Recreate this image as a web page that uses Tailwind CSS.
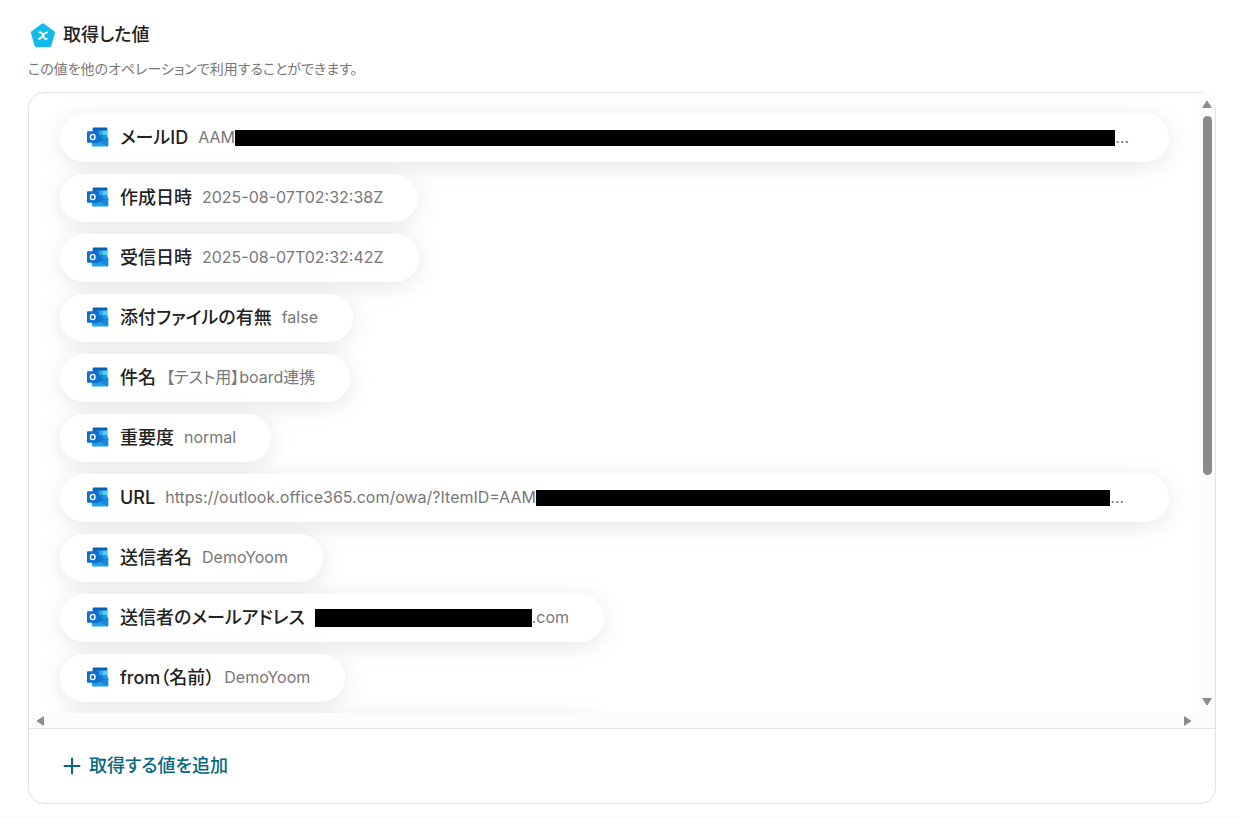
<!DOCTYPE html>
<html lang="ja">
<head>
    <meta charset="UTF-8">
    <meta name="viewport" content="width=device-width, initial-scale=1.0">
    <title>取得した値</title>
    <script src="https://cdn.jsdelivr.net/npm/@tailwindcss/browser@4"></script>
</head>
<body class="flex h-screen flex-col border-b border-[#f9f9f9] bg-white px-7 pt-[21px] pb-[13px] font-['Inter','Noto_Sans_CJK_JP',sans-serif] text-[#222] [font-feature-settings:'palt']">

    <!-- アイコン定義 -->
    <svg class="hidden">
        <symbol id="outlook" viewBox="0 0 24 24">
            <path d="M7.5 2.5h13a.8.8 0 0 1 .8.8V17H6.7V3.3a.8.8 0 0 1 .8-.8z" fill="#0a5fb4"/>
            <path d="M6.7 5.5h4.9v5H6.7z" fill="#0f78d4"/>
            <path d="M11.6 5.5h4.8v5h-4.8z" fill="#28a8ea"/>
            <path d="M16.4 5.5h4.9v5h-4.9z" fill="#50d0fa"/>
            <path d="M11.6 10.500h4.800v5h-4.800z" fill="#0f78d4"/>
            <path d="M16.400 10.500h4.900v4h-4.900z" fill="#1e96e4"/>
            <path d="M6 12.500l8.300 4.200 7.900-4.200v8.200a.8.8 0 0 1-.8.8H6.800a.8.8 0 0 1-.8-.8z" fill="#22a2ea"/>
            <path d="M22.200 12.500v8.200a.8.8 0 0 1-.2.500L13.500 16.900z" fill="#1787dc"/>
            <path d="M13.600 7v10.500a1 1 0 0 1-1 1H6V6h6.600a1 1 0 0 1 1 1z" fill="#064a8c" fill-opacity=".25"/>
            <rect x="1" y="6.300" width="11.400" height="11.400" rx=".9" fill="#0f6fd0"/>
            <ellipse cx="6.700" cy="12" rx="2.300" ry="2.600" fill="none" stroke="#fff" stroke-width="1.400"/>
        </symbol>
    </svg>

    <header>
        <div class="flex h-7 items-center gap-1.5">
            <svg class="ml-0.5 size-[27px] shrink-0" viewBox="0 0 27 27">
                <path d="M12.900 3.200L23.200 10.800l-3.600 12.500H6.300L2.700 10.800z" fill="#12bbea" stroke="#12bbea" stroke-width="3.600" stroke-linejoin="round"/>
                <path d="M9.300 10.300h1.400c.7 0 1 .4 1.300 1l2 4.400c.3.700.7 1.100 1.400 1.100h1.300M17.200 10.300c-1.500 0-2 .5-2.900 1.600l-2.900 3.500c-.8 1-1.300 1.400-2.500 1.400" fill="none" stroke="#fff" stroke-width="1.800" stroke-linecap="round"/>
            </svg>
            <h1 class="text-[18px] leading-6 font-medium">取得した値</h1>
        </div>
        <p class="mt-2.5 text-[14px] leading-5 text-[#777]">この値を他のオペレーションで利用することができます。</p>
    </header>

    <main class="mt-[13px] mr-[-2px] flex min-h-0 flex-1 flex-col rounded-2xl border border-[#e3e3e3]">
        <div class="flex min-h-0 flex-1 border-b border-[#e3e3e3]">
            <div class="flex min-w-0 flex-1 flex-col">
                <ul class="flex min-h-0 flex-1 flex-col items-start gap-3 overflow-hidden pt-[21px] pr-[30px] pl-[31px] text-[16px] whitespace-nowrap text-[#777]">
                    <li class="flex h-12 w-full shrink-0 items-center rounded-full bg-white pr-10 pb-0.5 pl-[26px] shadow-[0_4px_24px_rgba(0,0,0,0.1)]">
                        <svg class="mr-2.5 size-6 shrink-0"><use href="#outlook"/></svg>
                        <span class="mr-2.5 text-[18px] font-medium text-[#222]">メールID</span>
                        <span>AAM</span><span class="mt-0.5 h-4 flex-1 bg-black"></span><span>…</span>
                    </li>
                    <li class="flex h-12 shrink-0 items-center rounded-full bg-white pr-[35px] pb-0.5 pl-[26px] shadow-[0_4px_24px_rgba(0,0,0,0.1)]">
                        <svg class="mr-2.5 size-6 shrink-0"><use href="#outlook"/></svg>
                        <span class="mr-2.5 text-[18px] font-medium text-[#222]">作成日時</span>
                        <span>2025-08-07T02:32:38Z</span>
                    </li>
                    <li class="flex h-12 shrink-0 items-center rounded-full bg-white pr-[35px] pb-0.5 pl-[26px] shadow-[0_4px_24px_rgba(0,0,0,0.1)]">
                        <svg class="mr-2.5 size-6 shrink-0"><use href="#outlook"/></svg>
                        <span class="mr-2.5 text-[18px] font-medium text-[#222]">受信日時</span>
                        <span>2025-08-07T02:32:42Z</span>
                    </li>
                    <li class="flex h-12 shrink-0 items-center rounded-full bg-white pr-[35px] pb-0.5 pl-[26px] shadow-[0_4px_24px_rgba(0,0,0,0.1)]">
                        <svg class="mr-2.5 size-6 shrink-0"><use href="#outlook"/></svg>
                        <span class="mr-2.5 text-[18px] font-medium text-[#222]">添付ファイルの有無</span>
                        <span>false</span>
                    </li>
                    <li class="flex h-12 shrink-0 items-center rounded-full bg-white pr-[35px] pb-0.5 pl-[26px] shadow-[0_4px_24px_rgba(0,0,0,0.1)]">
                        <svg class="mr-2.5 size-6 shrink-0"><use href="#outlook"/></svg>
                        <span class="mr-2.5 text-[18px] font-medium text-[#222]">件名</span>
                        <span>【テスト用】board連携</span>
                    </li>
                    <li class="flex h-12 shrink-0 items-center rounded-full bg-white pr-[35px] pb-0.5 pl-[26px] shadow-[0_4px_24px_rgba(0,0,0,0.1)]">
                        <svg class="mr-2.5 size-6 shrink-0"><use href="#outlook"/></svg>
                        <span class="mr-2.5 text-[18px] font-medium text-[#222]">重要度</span>
                        <span>normal</span>
                    </li>
                    <li class="flex h-12 w-full shrink-0 items-center rounded-full bg-white pr-[45px] pb-0.5 pl-[26px] shadow-[0_4px_24px_rgba(0,0,0,0.1)]">
                        <svg class="mr-2.5 size-6 shrink-0"><use href="#outlook"/></svg>
                        <span class="mr-2.5 text-[18px] font-medium text-[#222]">URL</span>
                        <span>https://outlook.office365.com/owa/?ItemID=AAM</span><span class="mt-0.5 h-4 flex-1 bg-black"></span><span>…</span>
                    </li>
                    <li class="flex h-12 shrink-0 items-center rounded-full bg-white pr-[35px] pb-0.5 pl-[26px] shadow-[0_4px_24px_rgba(0,0,0,0.1)]">
                        <svg class="mr-2.5 size-6 shrink-0"><use href="#outlook"/></svg>
                        <span class="mr-2.5 text-[18px] font-medium text-[#222]">送信者名</span>
                        <span>DemoYoom</span>
                    </li>
                    <li class="flex h-12 shrink-0 items-center rounded-full bg-white pr-[35px] pb-0.5 pl-[26px] shadow-[0_4px_24px_rgba(0,0,0,0.1)]">
                        <svg class="mr-2.5 size-6 shrink-0"><use href="#outlook"/></svg>
                        <span class="mr-2.5 text-[18px] font-medium text-[#222]">送信者のメールアドレス</span>
                        <span class="mt-0.5 h-[18px] w-[217px] bg-black"></span><span>.com</span>
                    </li>
                    <li class="flex h-12 shrink-0 items-center rounded-full bg-white pr-[35px] pb-0.5 pl-[26px] shadow-[0_4px_24px_rgba(0,0,0,0.1)]">
                        <svg class="mr-2.5 size-6 shrink-0"><use href="#outlook"/></svg>
                        <span class="mr-2.5 text-[18px] font-medium text-[#222]">from（名前）</span>
                        <span>DemoYoom</span>
                    </li>
                    <li class="h-12 w-[545px] shrink-0 rounded-full bg-white shadow-[0_4px_24px_rgba(0,0,0,0.1)]"></li>
                </ul>
                <!-- 横スクロールバー -->
                <div class="flex h-[15px] shrink-0 items-center justify-between bg-[#fcfcfc] px-[7px]">
                    <svg class="h-2.5 w-2" viewBox="0 0 8 10"><path d="M7.5.8v8.4L1 5z" fill="#8b8b8b" stroke="#8b8b8b" stroke-linejoin="round"/></svg>
                    <svg class="h-2.5 w-2" viewBox="0 0 8 10"><path d="M.5.8v8.4L7 5z" fill="#8b8b8b" stroke="#8b8b8b" stroke-linejoin="round"/></svg>
                </div>
            </div>
            <!-- 縦スクロールバー -->
            <div class="flex w-4 shrink-0 flex-col items-center bg-[#fcfcfc] pt-[7px] pb-[22px]">
                <svg class="h-2 w-2.5 shrink-0" viewBox="0 0 10 8"><path d="M.8 7.5h8.4L5 1z" fill="#8b8b8b" stroke="#8b8b8b" stroke-linejoin="round"/></svg>
                <div class="my-2 flex-1">
                    <div class="h-[62.5%] w-[9px] rounded-full bg-[#8b8b8b]"></div>
                </div>
                <svg class="h-2 w-2.5 shrink-0" viewBox="0 0 10 8"><path d="M.8.5h8.4L5 7z" fill="#8b8b8b" stroke="#8b8b8b" stroke-linejoin="round"/></svg>
            </div>
        </div>
        <div class="flex h-[74px] shrink-0 items-center pl-[34px]">
            <button type="button" class="flex items-center gap-2 text-[18px] leading-6 font-medium text-[#066880]">
                <svg class="size-[18px]" viewBox="0 0 18 18"><path d="M9 1.5v15M1.5 9h15" fill="none" stroke="currentColor" stroke-width="2" stroke-linecap="round"/></svg>
                取得する値を追加
            </button>
        </div>
    </main>
</body>
</html>
